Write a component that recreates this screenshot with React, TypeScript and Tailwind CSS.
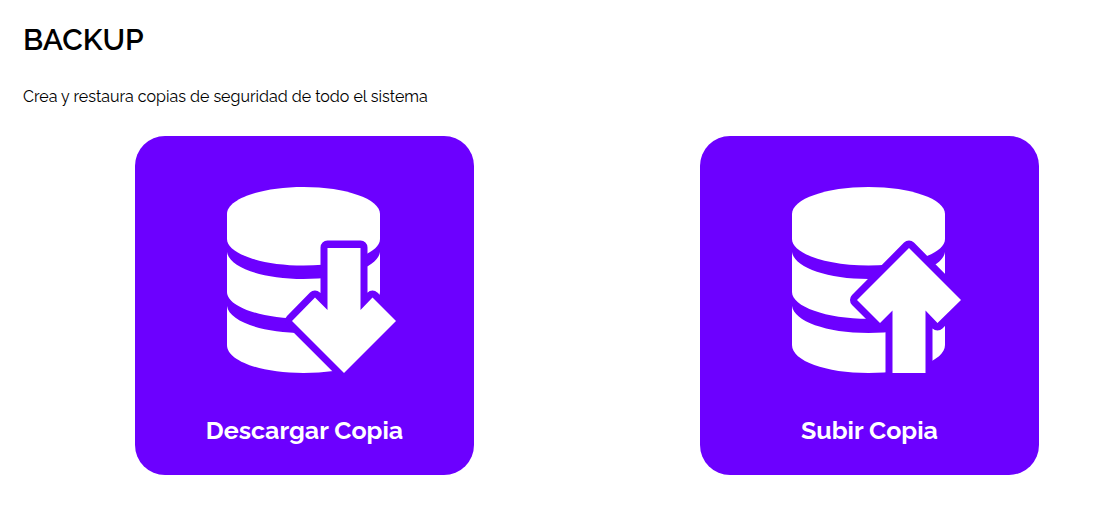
type Direction = "down" | "up";

const arrows: Record<Direction, { shape: string; outline: string }> = {
  down: {
    shape: "M112.5 68H145.5V130L157.5 117.5L181 141L129 193L77 141L100 117.5L112.5 130Z",
    outline: "M112.5 67.500H145.5V130L157.5 117.5L181 141V193H129L77 141L100 117.5L112.5 130Z",
  },
  up: {
    shape: "M129 68L181 120L157.5 143L145.5 130.5V193H112.5V130.5L100 143L77 120Z",
    outline: "M129 67.500L181 120L157.5 143.500L145.5 130.5V210H112.5V130.5L100 143L77 120Z",
  },
};

function DatabaseIcon({ direction }: { direction: Direction }) {
  const { shape, outline } = arrows[direction];
  return (
    <svg viewBox="-3 7 185 187" className="h-[187px] w-[185px]" aria-hidden="true">
      <g fill="#fff">
        <path d="M12 34C12 19 46 7 88.5 7S165 19 165 34V59C165 73.500 131 85.500 88.500 85.500S12 73.500 12 59Z" />
        <path d="M12 72C14 87 46 99 88.500 99S163 87 165 72V112C165 126.500 131 138.800 88.500 138.800S12 126.500 12 112Z" />
        <path d="M12 126C14 141 46 153 88.500 153S163 141 165 126V165C165 181 131 193 88.500 193S12 181 12 165Z" />
      </g>
      <path d={outline} fill="#6c00ff" stroke="#6c00ff" strokeWidth="14" strokeLinejoin="round" />
      <path d={shape} fill="#fff" />
    </svg>
  );
}

function ActionCard({ label, direction }: { label: string; direction: Direction }) {
  return (
    <button
      type="button"
      className="flex w-[339px] cursor-pointer flex-col items-center gap-9 rounded-[30px] bg-[#6c00ff] pt-[51px] pb-[25px] text-white"
    >
      <DatabaseIcon direction={direction} />
      <span className="text-[25px] leading-10 font-bold">{label}</span>
    </button>
  );
}

export default function App() {
  return (
    <main className="min-h-screen bg-white px-[23px] pt-5 pb-8 font-['Raleway','Lato',sans-serif] text-black">
      <h1 className="text-[30px] leading-10 font-semibold">BACKUP</h1>
      <p className="mt-[25px] text-base leading-6 font-normal">
        Crea y restaura copias de seguridad de todo el sistema
      </p>
      <div className="mt-[27px] flex flex-wrap justify-center gap-x-[226px] gap-y-8 pl-14">
        <ActionCard label="Descargar Copia" direction="down" />
        <ActionCard label="Subir Copia" direction="up" />
      </div>
    </main>
  );
}
